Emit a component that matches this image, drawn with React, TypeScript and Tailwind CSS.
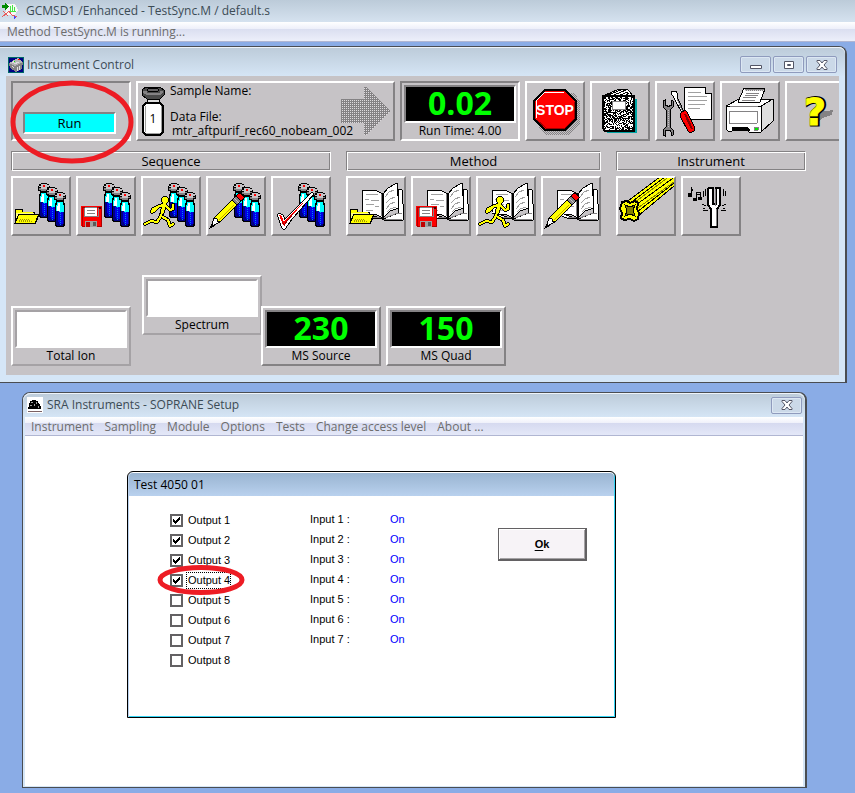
import type { ReactNode } from "react";

const raised = "border-2 border-t-white border-l-white border-r-[#848284] border-b-[#848284]";
const sunken = "border-2 border-t-[#848284] border-l-[#848284] border-r-white border-b-white";

function Vial({ x, y }: { x: number; y: number }) {
  return (
    <g transform={`translate(${x} ${y})`}>
      <path d="M2 8h8v2l1 2v21l-1 2H2l-1-2V12l1-2z" fill="#000" />
      <path d="M3 10h6v3h1v7H2v-7h1z" fill="#00ffff" />
      <path d="M4 11h2v8H3v-5h1z" fill="#fff" />
      <path d="M2 19h3v1h5v12H9v2H3v-1H2z" fill="#000084" />
      <path d="M4 20h5v12H5v-2H4z" fill="#0000e8" />
      <path d="M6.500 20v13" stroke="#0086f0" strokeDasharray="1 1" />
      <path d="M3 0h6v1h2v2h1v4h-2v2H2V8H0V3h1V1h2z" fill="#000" />
      <path d="M3 1h6v1h2v2H9v2H3V4H1V3h2z" fill="#c6c3c6" />
      <path d="M1 5h2v1h6V5h2v1H9v2H3V7H1z" fill="#848284" />
      <path d="M5 2h2v2H5z" fill="#ff0000" />
    </g>
  );
}

function Vials() {
  return (
    <g>
      <Vial x={27} y={7} />
      <Vial x={35} y={11} />
      <Vial x={43} y={16} />
    </g>
  );
}

function Book() {
  return (
    <g>
      <path d="M20 35l-2 4 8 3h9l3 2h19l1-2-2-28-4-1v24l-15 6-12-4z" fill="#fff" stroke="#000" />
      <path d="M27 41h8l3 2h18M39 42l13-5h4" fill="none" stroke="#848284" />
      <path d="M17 14h6l8 1 6 3v24l-6-3-8-1-7-1z" fill="#fff" stroke="#000" />
      <path d="M37 18l5-6 9-5 2 25-9 3-7 7z" fill="#fff" stroke="#000" />
      <path d="M20 18h8l4 1M19 23h4M25 24l8 1M20 28h8M29 30l4 1M20 34h7M39 21l4-5 5-2M40 27l4-4 5-2M40 33l4-5 5-2M41 36l3-3 6-2" fill="none" stroke="#a0a0a0" />
      <path d="M37 18v25" stroke="#000" strokeWidth="2" />
      <path d="M35 18v22" stroke="#848284" />
    </g>
  );
}

function Folder() {
  return (
    <g>
      <path d="M4 47V35l1-2h6l1 3h11l1 3" fill="#ffff84" stroke="#000" />
      <path d="M4 47l4-9h20l-4 9z" fill="#ffff00" stroke="#000" />
      <path d="M5 34h6v2h11v1H5z" fill="#ffff00" />
      <path d="M9 43.500h10M8 45.500h14M8 44.500h12" stroke="#a59a00" strokeDasharray="1 1" />
      <path d="M24 48l4-9" stroke="#000" />
    </g>
  );
}

function Floppy() {
  return (
    <g>
      <path d="M5 30h20l1 1v20H6l-1-1z" fill="#ff0000" />
      <path d="M6 50V31h19v19z" fill="none" stroke="#b00000" />
      <path d="M9 31h12v9H9z" fill="#fff" />
      <path d="M9 31h12M11 34h8M11 37h8M8 32v8h14v-8" fill="none" stroke="#848284" />
      <path d="M9 45h12v6H9z" fill="#a0a0a0" />
      <path d="M10 46h4v5h-4z" fill="#c00000" />
      <path d="M17 46h3v4h-3z" fill="#5a5a5a" />
      <path d="M23 31h2v2h-2z" fill="#400000" />
    </g>
  );
}

function Runner() {
  const limbs = "M23 29l-5 1-5 5M18 30l-6 3-1 3M25 30l4 4 3-1v-4M22 31l-2 9M20 40l-4 6-6-1-6 3M20 40l7 4 2 6 3-2";
  return (
    <g fill="none" strokeLinejoin="round" strokeLinecap="round">
      <path d={limbs} stroke="#000" strokeWidth="4" />
      <circle cx="24" cy="24" r="4" fill="#000" />
      <path d="M24 27l-3 10" stroke="#000" strokeWidth="5" />
      <path d={limbs} stroke="#ffff00" strokeWidth="2" />
      <circle cx="24" cy="24" r="3" fill="#ffff00" />
      <path d="M24 27l-3 10" stroke="#ffff00" strokeWidth="3" />
    </g>
  );
}

function Pencil() {
  return (
    <g stroke="#000">
      <path d="M5 51l3-9 18-18 5 5-17 17z" fill="#ffff00" />
      <path d="M5 51l3-9 3 1v2l3 1z" fill="#fff" />
      <path d="M4 52l2-4 2 2z" fill="#000" />
      <path d="M26 24l4-4 5 5-4 4z" fill="#848284" />
      <path d="M30 20l3-3h1l4 4v1l-3 3z" fill="#ff0000" />
      <path d="M28 22l5 5" stroke="#c6c3c6" />
      <path d="M13 44l15-15" stroke="#c8a800" />
    </g>
  );
}

function Tick() {
  return (
    <g strokeLinejoin="round">
      <path d="M8 39l3 1 2 6L41 18 20 42l-7 10-1-1z" fill="#fff" stroke="#000" strokeWidth="4" />
      <path d="M8 39l3 1 2 6L41 18 20 42l-7 10-1-1z" fill="#ff0000" stroke="#fff" strokeWidth="2" />
      <path d="M8 39l3 1 2 6L38 20 20 41l-7 9-1-1z" fill="#ff0000" />
      <path d="M11 45l2 4 9-11" fill="none" stroke="#a00000" />
    </g>
  );
}

function Quadrupole() {
  return (
    <g>
      <path d="M9 27L44 1l20-1v5L22 40z" fill="#ffff00" stroke="#000" />
      <path d="M13 28L50 0M17 31L60 0M21 36L62 4" fill="none" stroke="#000" />
      <path d="M15 29L54 0M19 34L62 3" stroke="#848200" />
      <path d="M6 26l5-1 3 2 5-2 3 2-1 6 2 4-1 6-4 2-4-2-6 1-3-2 1-5-2-4z" fill="#ffff00" stroke="#000" strokeWidth="2" />
      <path d="M9 29l5 2 5-2-2 5 2 6-5-2-5 2 2-5z" fill="#848200" stroke="#000" />
    </g>
  );
}

function TuningFork() {
  return (
    <g fill="none" stroke="#000">
      <path d="M28 12h4v16h3V12h4v17l-3 4v18h-6V33l-3-4V13z" fill="#fff" strokeWidth="2" />
      <path d="M34 13v17M35 33v17" stroke="#848284" />
      <path d="M24 13v7M22 15v6M42 13v7M44 15v5M25 30l-4-2M27 34l-5 1M24 32h-2M41 30l4-2M40 34l5 1M42 32h2" />
      <path d="M10 11v8M10 12l2 3M15 17v6M19 16v6M15 17l4-1M15 19l4-1" />
      <path d="M7 17h3v3H7zM12 22h3v2h-3zM17 21h3v2h-3z" fill="#000" />
    </g>
  );
}

function StopSign() {
  return (
    <g>
      <defs>
        <pattern id="dither" width="2" height="2" patternUnits="userSpaceOnUse">
          <path d="M0 0h1v1H0zM1 1h1v1H1z" fill="#848284" />
        </pattern>
      </defs>
      <path d="M23 12h27l5 9v22L43 54H21l-7-6z" fill="url(#dither)" />
      <path d="M20 9h20l11 11v18L40 49H20L9 38V20z" fill="#ff0000" stroke="#000" strokeWidth="2" />
      <path d="M11 37V20l9-9h19" fill="none" stroke="#fff" />
      <path d="M40 47H21l-9-8M49 21v17l-9 9" fill="none" stroke="#a00000" />
      <text x="30" y="34" textAnchor="middle" fill="#fff" className="font-['Liberation_Sans',Arial,sans-serif] text-[14px] font-bold">STOP</text>
    </g>
  );
}

function isSpeckled(cell: number) {
  let h = Math.imul(cell + 1, 2654435761);
  h = Math.imul(h ^ (h >>> 15), 2246822519);
  h ^= h >>> 13;
  return (h >>> 0) % 100 < 45;
}

const speckles = Array.from({ length: 29 * 35 }, (_, cell) => cell).filter(isSpeckled);

function Notebook() {
  return (
    <g>
      <path d="M17 18h30v34H17z" fill="#00a5a5" />
      <path d="M13 15l16-7 2 1 6-1 2 2 4 5z" fill="#fff" stroke="#000" />
      <path d="M18 14l13-5M24 14l12-5M30 14l8-3M36 14l3-2" stroke="#000" />
      <path d="M13 15h31v35H15l-2-3z" fill="#000" />
      <path d={speckles.map((cell) => `M${14 + (cell % 29)} ${15 + Math.floor(cell / 29)}h1v1h-1z`).join("")} fill="#fff" />
      <path d="M13 15h31v35H15l-2-3z" fill="none" stroke="#000" strokeWidth="2" />
      <path d="M22 20h13v8H22z" fill="#fff" stroke="#848284" />
    </g>
  );
}

function Tools() {
  return (
    <g stroke="#000">
      <path d="M29 6h21l6 6v26H29z" fill="#fff" />
      <path d="M50 6v6h6" fill="#c6c3c6" />
      <path d="M33 11h13M33 15h19M33 19h19M33 23h17M33 27h12" stroke="#a0a0a0" />
      <path d="M8 20l2-1v5h2v1h2v-1h2v-5l2 1v6l-3 3v17l3 3v5l-2 1v-4l-1-2h-4l-1 2v4l-2-1v-5l3-3V29l-3-3z" fill="#848284" />
      <path d="M13 29v18" stroke="#c6c3c6" strokeDasharray="1 1" />
      <path d="M16 12l1-2h4l2 4-1 2 7 15-2 1-8-15z" fill="#fff" />
      <path d="M22 18l6 13" stroke="#848284" />
      <path d="M26 32l4-3 2 2 8 16-1 3-4 2-2-2-8-15z" fill="#ff0000" />
      <path d="M30 33l7 15" stroke="#840000" strokeWidth="2" />
    </g>
  );
}

function Printer() {
  return (
    <g stroke="#000" strokeLinejoin="round">
      <path d="M6 25l13-7h34v22L41 51z" fill="#c6c3c6" />
      <path d="M6 25l13-7h34l-12 7z" fill="#fff" />
      <path d="M41 25l12-7v22L41 51z" fill="#dedede" />
      <path d="M6 25h35v26H29l-2-3H12v2H8l-2-2z" fill="#fff" />
      <path d="M18 21l6-14 21 1-5 13z" fill="#fff" />
      <path d="M25 8h19v2H25z" fill="url(#mesh)" stroke="none" />
      <path d="M26 12h13M25 14h13M23 16h13M22 19h13M9 30h28v12H9zM10 25h28" fill="none" stroke="#848284" />
      <path d="M12 46h15l3 3H12z" fill="#000" />
      <path d="M34 46h4v3h-4z" fill="#00e800" stroke="#848284" />
    </g>
  );
}

function Help() {
  const glyph = "font-['DejaVu_Sans',sans-serif] text-[38px] font-bold";
  return (
    <g>
      <path d="M35 31l13-2-1 5-10 3-4 5-5 1 2-6z" fill="#848284" />
      <text x="31" y="44" textAnchor="middle" fill="#000" stroke="#000" strokeWidth="3" className={glyph}>?</text>
      <text aria-hidden="true" x="30" y="44" textAnchor="middle" fill="#ffff00" stroke="#ffff00" className={glyph}>?</text>
    </g>
  );
}

function Tool({ label, children }: { label: string; children: ReactNode }) {
  return (
    <button type="button" aria-label={label} className={`h-[60px] w-[60px] shrink-0 bg-[#c6c3c6] ${raised}`}>
      <svg viewBox="2 2 56 56" className="block h-14 w-14" shapeRendering="crispEdges">
        {children}
      </svg>
    </button>
  );
}

function Group({ title, children }: { title: string; children: ReactNode }) {
  return (
    <section className="flex flex-col gap-[5px]">
      <h2 className="h-5 border border-t-[#848284] border-l-[#848284] border-r-white border-b-white text-center text-[13px] leading-[18px] shadow-[inset_1px_1px_0_#fff,inset_-1px_-1px_0_#848284]">
        {title}
      </h2>
      <div className="flex gap-[5px]">{children}</div>
    </section>
  );
}

function Readout({ value, label, inset = false }: { value: string; label: string; inset?: boolean }) {
  return (
    <div className={`h-[60px] w-[120px] shrink-0 bg-[#c6c3c6] px-[2px] pt-[2px] ${inset ? sunken : raised}`}>
      <div className={`h-[38px] bg-black text-center text-[32px] leading-8 font-bold text-[#00ff00] ${sunken}`}>
        {value}
      </div>
      <div className="text-center text-xs leading-4">{label}</div>
    </div>
  );
}

function Plot({ label }: { label: string }) {
  return (
    <div className="h-[60px] w-[120px] shrink-0 border-2 border-t-white border-l-white border-r-[#a5a2a5] border-b-[#a5a2a5] bg-[#c6c3c6] px-[2px] pt-[2px]">
      <div className="h-[38px] border-2 border-t-[#a5a2a5] border-r-white border-b-white border-l-[#a5a2a5] bg-white" />
      <div className="text-center text-xs leading-4">{label}</div>
    </div>
  );
}

function CaptionButton({ label, children }: { label: string; children: ReactNode }) {
  return (
    <button type="button" aria-label={label} className="flex h-[17px] w-[31px] items-center justify-center rounded-[2px] border border-[#8f9bbd] bg-[#cbd9e8] shadow-[inset_0_0_0_1px_#dce7f3]">
      <svg viewBox="0 0 12 10" className="h-[10px] w-3" fill="#fff" stroke="#535666">
        {children}
      </svg>
    </button>
  );
}

const closeGlyph = <path d="M1 .5h3L6 3 8 .5h3v1L8 5l3 3.500v1H8L6 7 4 9.500H1v-1L4 5 1 1.500z" />;

function InstrumentControl() {
  return (
    <main className="mt-1 mr-2 rounded-tr-lg border-t border-r-2 border-b border-[#4a4d52] bg-[#d5e6f7] pr-1.5 pb-[7px] pl-1.5 shadow-[inset_0_1px_0_#fff]">
      <header className="-mx-1.5 flex h-[29px] items-center rounded-tr-md bg-linear-to-b from-[#bccbd9] to-[#d5e5f5] px-2 pt-1.5 shadow-[inset_0_1px_0_#eef4fa]">
        <svg viewBox="0 0 16 16" className="h-4 w-4" shapeRendering="crispEdges">
          <path d="M0 0h16v16H0z" fill="#000084" />
          <path d="M0 0h16v16H0z" fill="none" stroke="#006868" strokeWidth="2" />
          <path d="M1 6l9-5 5 4-1 7-6 3-6-4z" fill="#848284" />
          <path d="M1 6l9-5 5 4-8 4z" fill="#b5b2b5" />
          <path d="M4 6l3-2M6 7l5-2M9 10v4M11 9v4M4 9l2 2" stroke="#dedede" />
          <path d="M10 2h2v1h-2z" fill="#ff0000" />
          <path d="M6 4h1v1H6z" fill="#00ff00" />
        </svg>
        <h1 className="ml-[3px] text-xs leading-4 text-[#3c4b55]">Instrument Control</h1>
        <div className="ml-auto flex gap-[2px]">
          <CaptionButton label="Minimize"><path d="M.5 5.500h11v3H.5z" /></CaptionButton>
          <CaptionButton label="Maximize"><path d="M1.500 1.500h9v7h-9zM4.500 4.500h3v1h-3z" /></CaptionButton>
          <CaptionButton label="Close">{closeGlyph}</CaptionButton>
        </div>
      </header>
      <div className="overflow-hidden bg-[#c6c3c6] px-[5px] pt-[5px] pb-[9px]">
        <div className="flex gap-[5px]">
          <div className={`relative h-[60px] w-[120px] shrink-0 pt-[29px] pl-[10px] ${sunken}`}>
            <button type="button" className={`block h-[22px] w-[93px] bg-[#00ffff] text-[13px] leading-[18px] ${sunken}`}>Run</button>
            <svg viewBox="0 0 124 84" className="pointer-events-none absolute -top-[3px] -left-[3px] z-10 h-[84px] w-[124px]">
              <ellipse cx="62" cy="42" rx="59" ry="39" fill="none" stroke="#ed1c24" strokeWidth="5" />
            </svg>
          </div>
          <div className={`relative flex h-[60px] w-[259px] shrink-0 ${raised}`}>
            <svg viewBox="2 2 32 56" className="h-14 w-8 shrink-0" shapeRendering="crispEdges">
              <path d="M11 18h12v5H11z" fill="#dedede" stroke="#000" />
              <path d="M10 22h14l3 3v26l-3 3H10l-3-3V25z" fill="#fff" stroke="#000" strokeWidth="2" />
              <path d="M9 25v26M25 25v26M10 52h14" stroke="#a0a0a0" />
              <path d="M10 6h14l4 3v5l-4 4H11l-5-4V9z" fill="#4a4a4a" stroke="#000" />
              <path d="M7 10h4v2h13v-2h3v2l-3 2H11l-4-2z" fill="#848284" />
              <ellipse cx="17" cy="9" rx="6" ry="2" fill="#636163" stroke="#000" />
              <text x="17" y="42" textAnchor="middle" className="text-xs">1</text>
            </svg>
            <svg viewBox="0 0 50 48" className="absolute top-1 right-0.5 h-12 w-[50px]" shapeRendering="crispEdges">
              <defs>
                <pattern id="mesh" width="2" height="2" patternUnits="userSpaceOnUse">
                  <path d="M0 0h2v2H0z" fill="#848284" />
                  <path d="M1 1h1v1H1z" fill="#dedbde" />
                </pattern>
              </defs>
              <path d="M0 12h23V0h2l25 24-25 24h-2V36H0z" fill="url(#mesh)" />
            </svg>
            <div className="relative pt-px text-xs leading-[14px]">
              <p>Sample Name:</p>
              <p className="mt-3">Data File:</p>
              <p className="pl-0.5">mtr_aftpurif_rec60_nobeam_002</p>
            </div>
          </div>
          <Readout value="0.02" label="Run Time: 4.00" inset />
          <Tool label="Stop run"><StopSign /></Tool>
          <Tool label="Logbook"><Notebook /></Tool>
          <Tool label="Instrument setup"><Tools /></Tool>
          <Tool label="Print"><Printer /></Tool>
          <Tool label="Help"><Help /></Tool>
        </div>
        <div className="mt-[10px] flex gap-[15px]">
          <Group title="Sequence">
            <Tool label="Load sequence"><Vials /><Folder /></Tool>
            <Tool label="Save sequence"><Vials /><Floppy /></Tool>
            <Tool label="Run sequence"><Vials /><Runner /></Tool>
            <Tool label="Edit sequence"><Vials /><Pencil /></Tool>
            <Tool label="Check sequence"><Vials /><Tick /></Tool>
          </Group>
          <Group title="Method">
            <Tool label="Load method"><Book /><Folder /></Tool>
            <Tool label="Save method"><Book /><Floppy /></Tool>
            <Tool label="Run method"><Book /><Runner /></Tool>
            <Tool label="Edit method"><Book /><Pencil /></Tool>
          </Group>
          <div className="w-[190px]">
            <Group title="Instrument">
              <Tool label="Mass filter"><Quadrupole /></Tool>
              <Tool label="Tune"><TuningFork /></Tool>
            </Group>
          </div>
        </div>
        <div className="mt-[39px] flex items-end">
          <Plot label="Total Ion" />
          <div className="mb-[31px] -mr-px ml-[11px]"><Plot label="Spectrum" /></div>
          <Readout value="230" label="MS Source" />
          <div className="ml-[5px]"><Readout value="150" label="MS Quad" /></div>
        </div>
      </div>
    </main>
  );
}

function TestDialog() {
  return (
    <section className="mt-[35px] ml-[102px] h-[247px] w-[489px] rounded-t-md border border-black bg-white shadow-[inset_1px_0_0_#bcd3f0,inset_-1px_-1px_0_#35d5f5]">
      <h2 className="mx-px mt-px h-[23px] rounded-t-sm bg-linear-to-b from-[#99b4d1] to-[#b9d1ee] pl-[5px] text-xs leading-[23px] text-black">Test 4050 01</h2>
      <div className="flex pl-[42px] font-['Liberation_Sans',Arial,sans-serif] text-[11px] leading-5">
        <ul className="mt-[14px] w-[140px]">
          {[1, 2, 3, 4, 5, 6, 7, 8].map((n) => (
            <li key={n} className="relative h-5">
              <label className="flex h-5 items-center">
                <input type="checkbox" defaultChecked={n <= 4} className="peer h-[13px] w-[13px] appearance-none border-2 border-[#636163] bg-white" />
                <svg viewBox="0 0 7 7" className="absolute top-[7px] left-[3px] hidden h-[7px] w-[7px] peer-checked:block" shapeRendering="crispEdges">
                  <path d="M0 2h1v1h1v1h1V3h1V2h1V1h1V0h1v3H6v1H5v1H4v1H3v1H2V6H1V5H0z" />
                </svg>
                <span className={n === 4 ? "ml-1 pl-px leading-[15px] outline outline-dotted outline-black" : "ml-[5px]"}>Output {n}</span>
              </label>
              {n === 4 && (
                <svg viewBox="0 0 88 30" className="pointer-events-none absolute -top-[5px] -left-[13px] z-10 h-[30px] w-[88px]">
                  <ellipse cx="44" cy="15" rx="41" ry="12.500" fill="none" stroke="#ed1c24" strokeWidth="5" />
                </svg>
              )}
            </li>
          ))}
        </ul>
        <dl className="mt-[13px] grid auto-rows-[20px] grid-cols-[80px_108px]">
          {[1, 2, 3, 4, 5, 6, 7].map((n) => (
            <div key={n} className="contents">
              <dt>Input {n} :</dt>
              <dd className="text-[#0000ff]">On</dd>
            </div>
          ))}
        </dl>
        <button type="button" className="mt-8 h-[33px] w-[89px] border border-r-2 border-b-2 border-[#636163] bg-[#f7f3f7] font-bold shadow-[inset_1px_1px_0_#fff,inset_-1px_-1px_0_#a5a2a5]">
          <span className="underline underline-offset-2">O</span>k
        </button>
      </div>
    </section>
  );
}

function SopraneSetup() {
  return (
    <section className="mt-[9px] mr-12 mb-[5px] ml-[22px] flex grow flex-col rounded-t-lg border border-r-2 border-[#4a4d52] bg-[#d5e6f7] px-0.5 pb-px">
      <header className="-mx-0.5 flex h-[24px] items-center rounded-t-lg bg-linear-to-b from-[#bccbd9] to-[#d5e5f5] pr-[3px] pl-1 shadow-[inset_0_1px_0_#eef4fa]">
        <svg viewBox="0 0 16 16" className="h-4 w-4" shapeRendering="crispEdges">
          <path d="M0 0h16v16H0z" fill="#fff" />
          <path d="M1 12v-2h1V6h1V4h2V3h4v1h2v2h1v1h1v2h1v3z" fill="#000" />
          <path d="M4 5h2M3 8h2M7 7v2M9 5v2M11 9v2" stroke="#a0a0a0" />
          <path d="M1 14h14" stroke="#7b6163" />
        </svg>
        <h2 className="ml-1 text-xs leading-4 text-[#3c4b55]">SRA Instruments - SOPRANE Setup</h2>
        <div className="ml-auto"><CaptionButton label="Close">{closeGlyph}</CaptionButton></div>
      </header>
      <nav className="flex h-[19px] gap-[11px] border-b border-[#b0b6d2] bg-[linear-gradient(#fff,#eef0fa_35%,#d6daf0_36%,#e4e8f8)] pl-1.5 text-xs leading-5 text-[#6d6d6d]">
        {["Instrument", "Sampling", "Module", "Options", "Tests", "Change access level", "About ..."].map((item) => (
          <button key={item} type="button" className="whitespace-nowrap">{item}</button>
        ))}
      </nav>
      <div className="grow bg-white">
        <TestDialog />
      </div>
    </section>
  );
}

export default function App() {
  return (
    <div className="flex min-h-screen flex-col overflow-hidden bg-[#8aace6] font-['Open_Sans','Noto_Sans',sans-serif] text-black">
      <header className="border-b border-[#b0b6d2]">
        <div className="flex h-[22px] items-center bg-linear-to-b from-[#bccbd9] to-[#d5e2ef] pl-0.5">
          <svg viewBox="0 0 16 16" className="h-4 w-4" shapeRendering="crispEdges">
            <path d="M5 1h8l3 6-3 5H3z" fill="#f7f7f7" />
            <path d="M0 2h3V0l4 4-4 3V5H0z" fill="#008a00" />
            <path d="M8 8V3M10 8V2M12 8V4M7 8h7" stroke="#42e842" fill="none" />
            <path d="M0 14l4-3 3-3 3 4 5 2M1 8l5 5" stroke="#e85a5a" fill="none" />
            <path d="M12 13h1v1h1v1h-1v1h-1z" fill="#4242ff" />
          </svg>
          <span className="ml-2 text-xs leading-4 text-[#3c4b55]">GCMSD1 /Enhanced - TestSync.M / default.s</span>
        </div>
        <p className="h-[19px] bg-[linear-gradient(#fff,#eef0fa_35%,#dadef0_36%,#eceffa)] pl-[7px] text-xs leading-5 text-[#6d6d6d]">Method TestSync.M is running...</p>
      </header>
      <InstrumentControl />
      <SopraneSetup />
    </div>
  );
}
